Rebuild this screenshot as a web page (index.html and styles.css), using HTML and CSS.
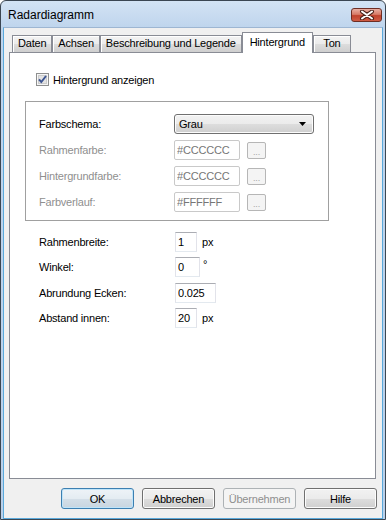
FILE: index.html
```html
<!DOCTYPE html>
<html lang="de">
<head>
    <meta charset="UTF-8">
    <meta name="viewport" content="width=device-width, initial-scale=1.0">
    <title>Radardiagramm</title>
    <link rel="stylesheet" href="styles.css">
</head>
<body>
    <div class="window">
        <div class="titlebar">
            <span class="title">Radardiagramm</span>
            <div class="close">
                <svg width="16" height="10" viewBox="0 0 16 10">
                    <path d="M3 1.5 L13 8.5 M13 1.5 L3 8.5" stroke="#4a2018" stroke-width="4" stroke-linecap="round"/>
                    <path d="M3 1.5 L13 8.5 M13 1.5 L3 8.5" stroke="#fff" stroke-width="2" stroke-linecap="round"/>
                </svg>
            </div>
        </div>
        <div class="client">
            <div class="tabs">
                <div class="tab">Daten</div>
                <div class="tab">Achsen</div>
                <div class="tab">Beschreibung und Legende</div>
                <div class="tab active">Hintergrund</div>
                <div class="tab">Ton</div>
            </div>
            <div class="panel">
                <label class="check">
                    <svg width="13" height="13" viewBox="0 0 13 13">
                        <rect x="0.5" y="0.5" width="12" height="12" fill="#f6f6f6" stroke="#8e8f8f"/>
                        <rect x="2.5" y="2.5" width="8" height="8" fill="#e3e3e3" stroke="#cbcbcb"/>
                        <path d="M3 6.3 L5.3 9 L10 3" fill="none" stroke="#3d5592" stroke-width="2"/>
                    </svg>
                    <span>Hintergrund anzeigen</span>
                </label>

                <div class="group">
                    <div class="row">
                        <span class="lbl">Farbschema:</span>
                        <div class="combo">
                            <span>Grau</span>
                            <svg width="7" height="4" viewBox="0 0 7 4"><polygon points="0,0 7,0 3.5,4" fill="#000"/></svg>
                        </div>
                    </div>
                    <div class="row">
                        <span class="lbl off">Rahmenfarbe:</span>
                        <div class="pick">
                            <input class="field color" type="text" value="#CCCCCC" disabled>
                            <span class="dots">...</span>
                        </div>
                    </div>
                    <div class="row">
                        <span class="lbl off">Hintergrundfarbe:</span>
                        <div class="pick">
                            <input class="field color" type="text" value="#CCCCCC" disabled>
                            <span class="dots">...</span>
                        </div>
                    </div>
                    <div class="row">
                        <span class="lbl off">Farbverlauf:</span>
                        <div class="pick">
                            <input class="field color" type="text" value="#FFFFFF" disabled>
                            <span class="dots">...</span>
                        </div>
                    </div>
                </div>

                <div class="settings">
                    <div class="row">
                        <span class="lbl">Rahmenbreite:</span>
                        <div class="pick"><input class="field w22" type="text" value="1"><span class="unit">px</span></div>
                    </div>
                    <div class="row">
                        <span class="lbl">Winkel:</span>
                        <div class="pick"><input class="field w25" type="text" value="0"><span class="unit deg">°</span></div>
                    </div>
                    <div class="row">
                        <span class="lbl">Abrundung Ecken:</span>
                        <div class="pick"><input class="field w41" type="text" value="0.025"></div>
                    </div>
                    <div class="row">
                        <span class="lbl">Abstand innen:</span>
                        <div class="pick"><input class="field w22" type="text" value="20"><span class="unit">px</span></div>
                    </div>
                </div>
            </div>
            <div class="buttons">
                <button class="btn default">OK</button>
                <button class="btn">Abbrechen</button>
                <button class="btn" disabled>Übernehmen</button>
                <button class="btn">Hilfe</button>
            </div>
        </div>
    </div>
</body>
</html>
```

FILE: styles.css
```css
body{
    margin: 0;
    font-family: "Liberation Sans", Arial, sans-serif;
    font-size: 11px;
    letter-spacing: -0.2px;
    color: #000;
}
.window{
    width: 386px;
    height: 520px;
    box-sizing: border-box;
    border: 1px solid #3b4652;
    border-radius: 6px 6px 0 0;
    padding: 0 2px;
    background: linear-gradient(#d3e3f4, #bfd5ed 26px, #b9d0ea);
    display: flex;
    flex-direction: column;
}
.titlebar{
    height: 26px;
    flex: none;
    display: flex;
    justify-content: space-between;
    padding: 0 1px 0 5px;
}
.title{
    font-size: 12px;
    letter-spacing: 0;
    line-height: 24px;
    padding-top: 2px;
}
.close{
    width: 31px;
    height: 14px;
    margin-top: 7px;
    box-sizing: border-box;
    border: 1px solid #6e2d23;
    border-radius: 3px;
    background: linear-gradient(#e9afa3, #d77a67 45%, #c0412c 55%, #cf5c45);
    display: flex;
    align-items: center;
    justify-content: center;
}
.client{
    flex: 1;
    background: #f0f0f0;
    border: 1px solid #5aa9db;
    border-top-color: #9db6d2;
    display: flex;
    flex-direction: column;
}
.tabs{
    display: flex;
    align-items: flex-start;
    height: 20px;
    margin: 4px 0 0 8px;
}
.tab{
    height: 17px;
    margin-top: 3px;
    box-sizing: border-box;
    min-width: 38px;
    padding: 0 5px;
    text-align: center;
    line-height: 15px;
    border: 1px solid #898c95;
    border-bottom: none;
    background: linear-gradient(#f3f3f3, #ebebeb 50%, #dddddd 51%, #cfcfcf);
    box-shadow: inset 1px 1px 0 #fff;
}
.tab.active{
    position: relative;
    z-index: 1;
    height: 21px;
    margin-top: 0;
    margin-bottom: -1px;
    padding: 0 7px;
    line-height: 18px;
    background: #fff;
    box-shadow: none;
}
.panel{
    height: 427px;
    box-sizing: border-box;
    margin: 0 6px 0 5px;
    border: 1px solid #898c95;
    background: #fff;
}
.check{
    display: flex;
    align-items: center;
    gap: 4px;
    margin: 20px 0 0 26px;
    height: 13px;
}
.check svg{
    display: block;
}
.group{
    width: 304px;
    box-sizing: border-box;
    margin: 15px 0 0 15px;
    padding: 12px 0 8px 13px;
    border: 1px solid #a0a0a0;
    display: flex;
    flex-direction: column;
    gap: 6px;
}
.row{
    display: flex;
    align-items: center;
    height: 20px;
}
.lbl{
    width: 135px;
    flex: none;
}
.lbl.off{
    color: #8f8f8f;
}
.combo{
    width: 140px;
    height: 20px;
    box-sizing: border-box;
    border: 1px solid #707070;
    border-radius: 3px;
    background: linear-gradient(#f2f2f2, #ebebeb 50%, #dddddd 51%, #cfcfcf);
    box-shadow: inset 0 0 0 1px #fcfcfc;
    display: flex;
    align-items: center;
    justify-content: space-between;
    padding: 0 7px 0 4px;
}
.pick{
    display: flex;
    align-items: center;
}
.field{
    height: 20px;
    box-sizing: border-box;
    margin: 0;
    padding: 0 2px;
    font: inherit;
    letter-spacing: inherit;
    color: #000;
    background: #fff;
    border: 1px solid #e2e3ea;
    border-top-color: #abadb3;
    border-bottom-color: #e3e9ef;
    outline: none;
}
.field.color{
    width: 66px;
    color: #767676;
    border: 1px solid #c9c9c9;
    border-radius: 2px;
}
.dots{
    width: 19px;
    height: 17px;
    box-sizing: border-box;
    margin-left: 7px;
    border: 1px solid #b6b6b6;
    border-radius: 2px;
    background: #f4f4f4;
    color: #a6a6a6;
    font-size: 9px;
    text-align: center;
    line-height: 18px;
}
.settings{
    margin: 11px 0 0 29px;
    display: flex;
    flex-direction: column;
    gap: 5.33px;
}
.settings .lbl{
    width: 136px;
}
.w22{ width: 22px; }
.w25{ width: 25px; }
.w41{ width: 41px; }
.unit{
    margin-left: 5px;
}
.unit.deg{
    margin-left: 3px;
    align-self: flex-start;
    margin-top: 1px;
}
.buttons{
    display: flex;
    justify-content: flex-end;
    gap: 8px;
    margin: 9px 5px 0 0;
}
.btn{
    width: 73px;
    height: 21px;
    margin: 0;
    padding: 0;
    font: inherit;
    letter-spacing: inherit;
    color: #000;
    border: 1px solid #707070;
    border-radius: 3px;
    background: linear-gradient(#f2f2f2, #ebebeb 50%, #dddddd 51%, #cfcfcf);
    box-shadow: inset 0 0 0 1px #fcfcfc;
}
.btn.default{
    border-color: #3c7fb1;
    box-shadow: inset 0 0 0 1px #bfe4f9;
    background: linear-gradient(#eef3f7, #e4ecf2 50%, #d4dfe8 51%, #c8d5e0);
}
.btn:disabled{
    color: #8f8f8f;
    border-color: #adb2b5;
    background: #f4f4f4;
    box-shadow: none;
}
```
